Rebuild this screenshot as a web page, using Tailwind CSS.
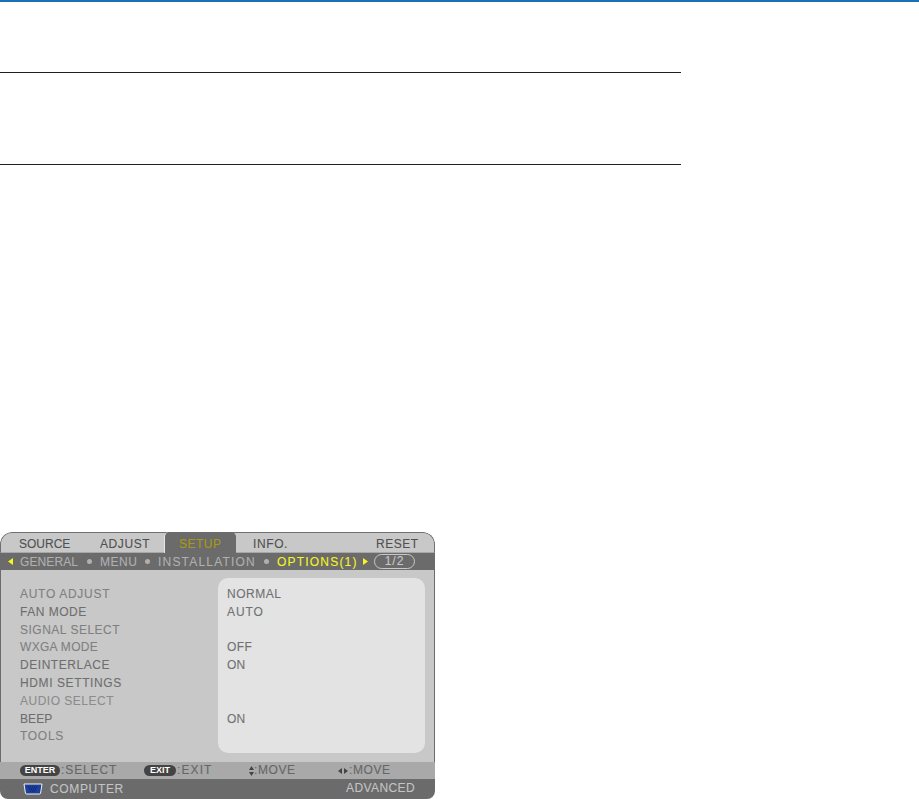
<!doctype html>
<html lang="en">
  <head>
    <meta charset="utf-8">
    <title>Projector menu</title>
    <script src="https://cdn.jsdelivr.net/npm/@tailwindcss/browser@4"></script>
  </head>
  <body class="bg-white h-[799px] overflow-hidden font-['Liberation_Sans',sans-serif]">
    <div class="h-[2px] bg-[#1a6fb5]"></div>
    <div class="mt-[70px] w-[681px] h-px bg-[#231f20]"></div>
    <div class="mt-[91px] w-[681px] h-px bg-[#231f20]"></div>

    <!-- OSD MENU -->
    <div class="mt-[367px] w-[435px] h-[267px] flex flex-col overflow-hidden rounded-t-[12px] rounded-b-[8px] text-[12px] leading-[13px] tracking-[0.5px] [-webkit-text-stroke:0.1px]">
      <div class="h-[21px] bg-[#c8c8c8] border-t border-x border-b border-t-[#707070] border-x-[#707070] border-b-[#a8a8a8] rounded-t-[12px] text-[#505050] relative">
        <span class="absolute left-[18px] top-[5px] tracking-[0px]">SOURCE</span>
        <span class="absolute left-[99px] top-[5px] tracking-[0.6px]">ADJUST</span>
        <span class="absolute left-[163px] -top-px w-[72px] h-[21px] bg-[#6b6b6b] border-l border-[#e8e8e8] rounded-tl-[5px] rounded-tr-[5px] text-[#a89a10] pl-[14px] pt-[6px]">SETUP</span>
        <span class="absolute left-[252px] top-[5px] tracking-[0.6px]">INFO.</span>
        <span class="absolute left-[375px] top-[5px]">RESET</span>
      </div>
      <div class="h-[17px] bg-[#6b6b6b] text-[#b0b0b0] relative">
        <svg class="absolute left-[8px] top-[5px]" width="5" height="7" viewBox="0 0 5 7"><path d="M5 0L0 3.500 5 7z" fill="#f5f520"/></svg>
        <span class="absolute left-[20px] top-[3px] tracking-[0.1px]">GENERAL</span>
        <span class="absolute left-[87px] top-[6px] w-[5px] h-[5px] rounded-full bg-[#b0b0b0]"></span>
        <span class="absolute left-[100px] top-[3px]">MENU</span>
        <span class="absolute left-[145px] top-[6px] w-[5px] h-[5px] rounded-full bg-[#b0b0b0]"></span>
        <span class="absolute left-[158px] top-[3px] tracking-[1.2px]">INSTALLATION</span>
        <span class="absolute left-[264px] top-[6px] w-[5px] h-[5px] rounded-full bg-[#b0b0b0]"></span>
        <span class="absolute left-[277px] top-[3px] tracking-[1.2px] text-[#f5f520]">OPTIONS(1)</span>
        <svg class="absolute left-[363px] top-[5px]" width="5" height="7" viewBox="0 0 5 7"><path d="M0 0L5 3.500 0 7z" fill="#f5f520"/></svg>
        <span class="absolute left-[374px] top-[1px] w-[41px] h-[15px] rounded-full border border-[#c8c8c8] text-[#c8c8c8] text-center tracking-[1px]">1/2</span>
      </div>
      <div class="h-[192px] bg-[#c8c8c8] border-x border-[#6b6b6b] flex pt-[8px] pb-[9px] pr-[9px] text-[#808080]">
        <div class="w-[217px] pl-[19px] pt-[10px] flex flex-col gap-[4.8px]">
          <span class="h-[13px] tracking-[0.7px]">AUTO ADJUST</span>
          <span class="h-[13px] text-[#6e6e6e]">FAN MODE</span>
          <span class="h-[13px]">SIGNAL SELECT</span>
          <span class="h-[13px] tracking-[0.3px]">WXGA MODE</span>
          <span class="h-[13px] text-[#6e6e6e] tracking-[0.55px]">DEINTERLACE</span>
          <span class="h-[13px] text-[#6e6e6e] tracking-[0.6px]">HDMI SETTINGS</span>
          <span class="h-[13px] text-[#8c8c8c]">AUDIO SELECT</span>
          <span class="h-[13px] text-[#6e6e6e] tracking-[0.1px]">BEEP</span>
          <span class="h-[13px] tracking-[0.7px]">TOOLS</span>
        </div>
        <div class="flex-1 bg-[#e3e3e3] rounded-[10px] pl-[9px] pt-[10px] flex flex-col gap-[4.8px] text-[#707070]">
          <span class="h-[13px]">NORMAL</span>
          <span class="h-[13px] tracking-[0.9px]">AUTO</span>
          <span class="h-[13px]"></span>
          <span class="h-[13px] tracking-[0.4px]">OFF</span>
          <span class="h-[13px] tracking-[0.2px]">ON</span>
          <span class="h-[13px]"></span>
          <span class="h-[13px]"></span>
          <span class="h-[13px] tracking-[0.2px]">ON</span>
        </div>
      </div>
      <div class="h-[17px] bg-[#a9a9a9] text-[#666666] relative">
        <span class="absolute left-[20px] top-[3px] w-[40px] h-[11px] rounded-full bg-[#444444] text-white text-[9px] font-bold text-center leading-[11px] tracking-normal [-webkit-text-stroke:0px]">ENTER</span>
        <span class="absolute left-[61px] top-[2px] tracking-[0.9px]">:SELECT</span>
        <span class="absolute left-[144px] top-[3px] w-[32px] h-[11px] rounded-full bg-[#444444] text-white text-[9px] font-bold text-center leading-[11px] tracking-normal [-webkit-text-stroke:0px]">EXIT</span>
        <span class="absolute left-[177px] top-[2px] tracking-[1.1px]">:EXIT</span>
        <svg class="absolute left-[249px] top-[4px]" width="5" height="10" viewBox="0 0 5 10"><path d="M2.500 0L5 4H0zM2.500 10L0 6H5z" fill="#444444"/></svg>
        <span class="absolute left-[254px] top-[2px] tracking-[0.6px]">:MOVE</span>
        <svg class="absolute left-[338px] top-[6px]" width="10" height="6" viewBox="0 0 10 6"><path d="M0 3L4 0V6zM10 3L6 0V6z" fill="#444444"/></svg>
        <span class="absolute left-[349px] top-[2px] tracking-[0.6px]">:MOVE</span>
      </div>
      <div class="h-[20px] bg-[#6b6b6b] text-[#c4c4c4] relative">
        <svg class="absolute left-[23px] top-[4px]" width="20" height="12" viewBox="0 0 20 12"><path d="M1 1H19L17.500 10.500Q17 11 16 11H4Q3 11 2.500 10.500Z" fill="#1c3f9c" stroke="#f0f0f0" stroke-width="1"/><path d="M5 4H15M6 6H14M7 8H13" stroke="#0a1a50" stroke-width="1" stroke-dasharray="1 1"/></svg>
        <span class="absolute left-[50px] top-[4px] tracking-[0.65px]">COMPUTER</span>
        <span class="absolute left-[346px] top-[3px] tracking-[0.4px]">ADVANCED</span>
      </div>
    </div>
  </body>
</html>
